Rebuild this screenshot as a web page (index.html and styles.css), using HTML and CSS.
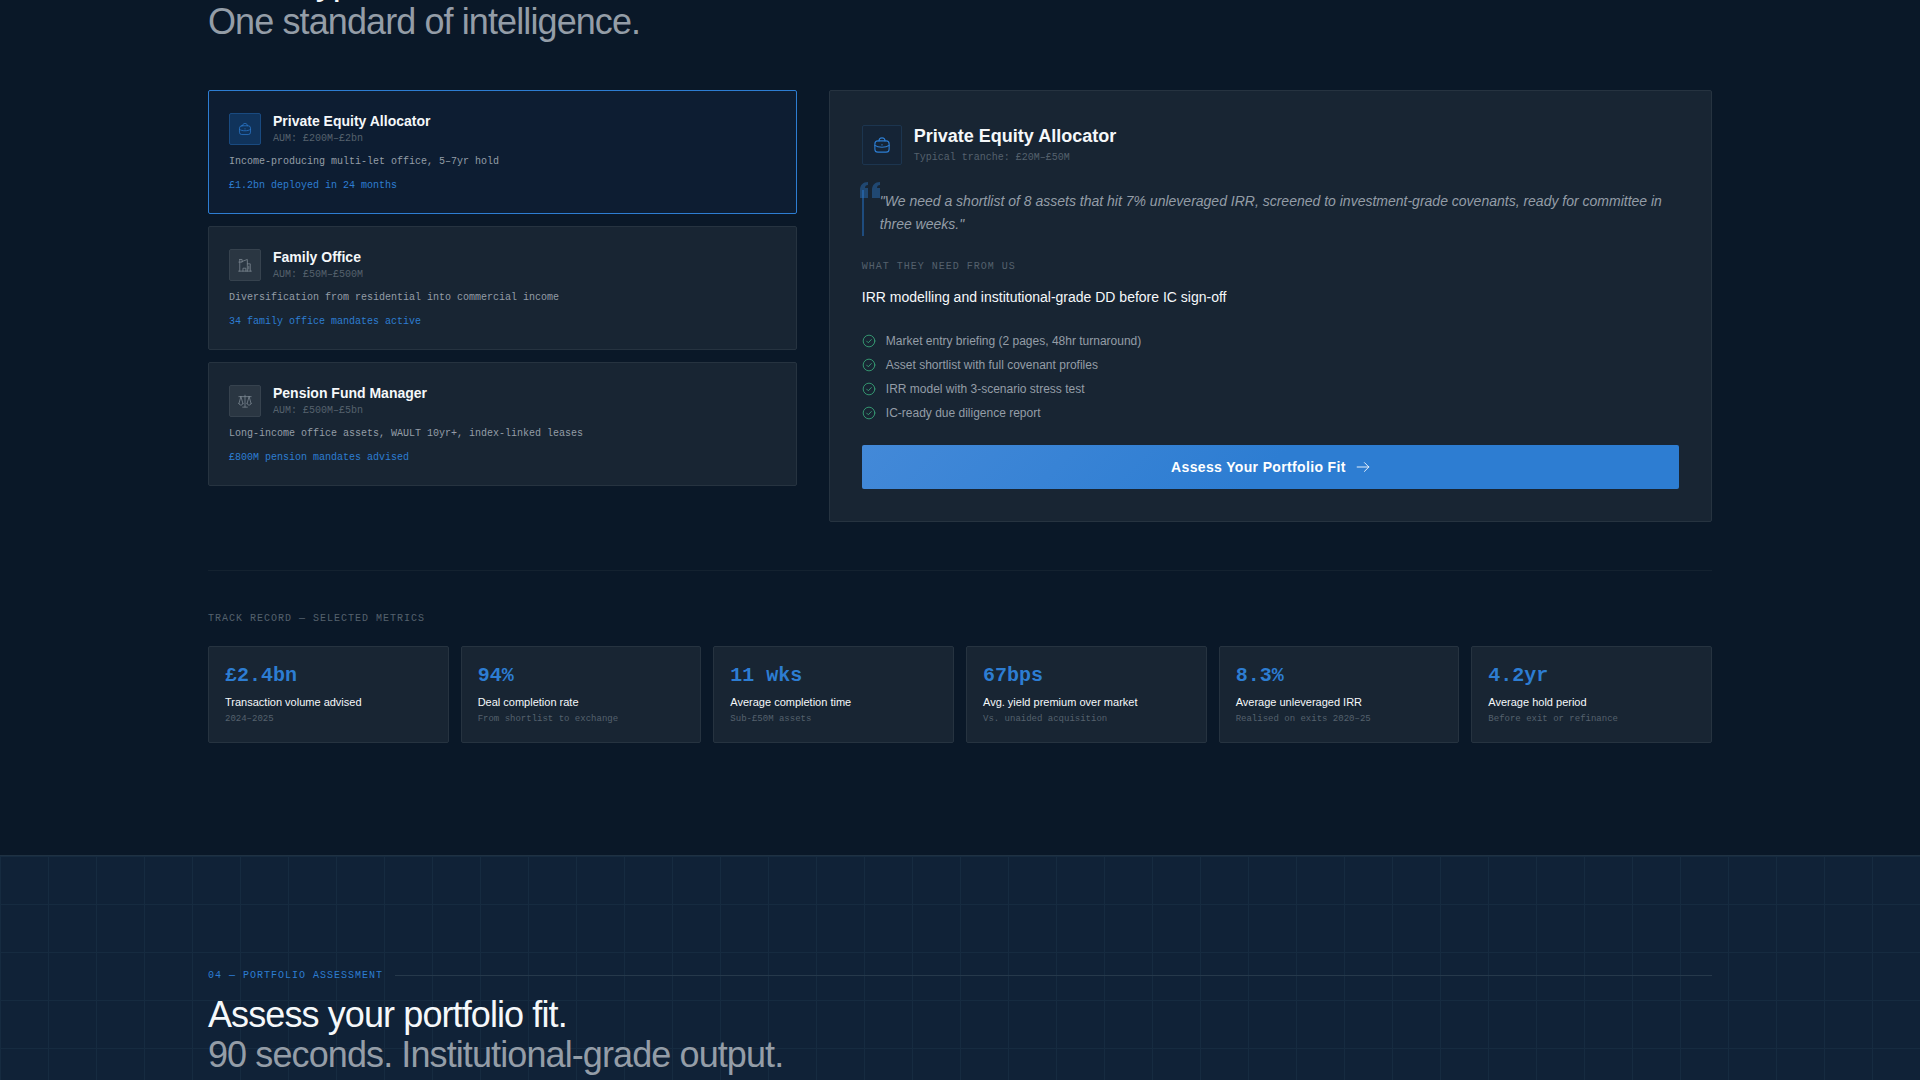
FILE: index.html
```
<!DOCTYPE html>
<html lang="en">
<head>
  <meta charset="UTF-8">
  <title>Portfolio Assessment</title>
  <link rel="stylesheet" href="styles.css">
</head>
<body>
  <svg class="sprite" aria-hidden="true">
    <symbol id="i-briefcase" viewBox="0 0 24 24">
      <rect x="2.500" y="6.500" width="19" height="15" rx="4"/>
      <path d="M8 6.500C8 4 9 2.500 12 2.500s4 1.500 4 4M2.500 12.500c2.500 2 5.500 2.500 9.500 2.500s7-.5 9.500-2.500M12 11.500v.5"/>
    </symbol>
    <symbol id="i-building" viewBox="0 0 24 24">
      <path d="M1 22.500h22M3 22.500V2.500M3 2.500h4v4M1.500 7h5M7 6l9-3.500v4M16 7v15.500M16 10h5v12.500M8.500 22.500v-5h5v5M18.500 14v5"/>
    </symbol>
    <symbol id="i-scales" viewBox="0 0 24 24">
      <path d="M12 2v20M8 22.500h8M1.500 4.500h21M5 4.500l-3.500 12M5 4.500l3.500 12M19 4.500l-3.500 12M19 4.500l3.500 12M1.500 16.500c.5 3.500 6.500 3.500 7 0M15.500 16.500c.5 3.500 6.500 3.500 7 0"/>
    </symbol>
    <symbol id="i-check" viewBox="0 0 24 24">
      <circle cx="12" cy="12" r="10"/>
      <path d="M8 12.200l2.800 2.800L16 9.500"/>
    </symbol>
    <symbol id="i-arrow" viewBox="0 0 24 24">
      <path d="M2 12h20M14.500 4.500L22 12l-7.500 7.500"/>
    </symbol>
    <symbol id="i-quote" viewBox="0 0 20 16">
      <path d="M0 16V8C0 3 3 0 8 0v3C6 3 5 4 5 6h3v10zM12 16V8c0-5 3-8 8-8v3c-2 0-3 1-3 3h3v10z"/>
    </symbol>
  </svg>

  <section class="investors">
    <div class="container">
      <h2 class="heading">Three types of investor.<br><span>One standard of intelligence.</span></h2>

      <div class="profiles">
        <div class="profile-list">
          <button type="button" class="profile active">
            <span class="profile-head">
              <span class="profile-icon"><svg><use href="#i-briefcase"/></svg></span>
              <span>
                <span class="profile-name">Private Equity Allocator</span>
                <span class="profile-aum">AUM: £200M–£2bn</span>
              </span>
            </span>
            <span class="profile-text">Income-producing multi-let office, 5–7yr hold</span>
            <span class="profile-stat">£1.2bn deployed in 24 months</span>
          </button>
          <button type="button" class="profile">
            <span class="profile-head">
              <span class="profile-icon"><svg><use href="#i-building"/></svg></span>
              <span>
                <span class="profile-name">Family Office</span>
                <span class="profile-aum">AUM: £50M–£500M</span>
              </span>
            </span>
            <span class="profile-text">Diversification from residential into commercial income</span>
            <span class="profile-stat">34 family office mandates active</span>
          </button>
          <button type="button" class="profile">
            <span class="profile-head">
              <span class="profile-icon"><svg><use href="#i-scales"/></svg></span>
              <span>
                <span class="profile-name">Pension Fund Manager</span>
                <span class="profile-aum">AUM: £500M–£5bn</span>
              </span>
            </span>
            <span class="profile-text">Long-income office assets, WAULT 10yr+, index-linked leases</span>
            <span class="profile-stat">£800M pension mandates advised</span>
          </button>
        </div>

        <article class="detail">
          <header class="detail-head">
            <span class="detail-icon"><svg><use href="#i-briefcase"/></svg></span>
            <div>
              <h3>Private Equity Allocator</h3>
              <p>Typical tranche: £20M–£50M</p>
            </div>
          </header>
          <blockquote>
            <svg class="quote-mark"><use href="#i-quote"/></svg>
            "We need a shortlist of 8 assets that hit 7% unleveraged IRR, screened to investment-grade covenants, ready for committee in three weeks."
          </blockquote>
          <h4 class="label">What they need from us</h4>
          <p class="need">IRR modelling and institutional-grade DD before IC sign-off</p>
          <ul class="deliverables">
            <li><svg><use href="#i-check"/></svg>Market entry briefing (2 pages, 48hr turnaround)</li>
            <li><svg><use href="#i-check"/></svg>Asset shortlist with full covenant profiles</li>
            <li><svg><use href="#i-check"/></svg>IRR model with 3-scenario stress test</li>
            <li><svg><use href="#i-check"/></svg>IC-ready due diligence report</li>
          </ul>
          <button type="button" class="cta">Assess Your Portfolio Fit <svg><use href="#i-arrow"/></svg></button>
        </article>
      </div>

      <div class="record">
        <h4 class="label">Track record — selected metrics</h4>
        <div class="metrics">
          <div class="metric"><strong>£2.4bn</strong><span>Transaction volume advised</span><small>2024–2025</small></div>
          <div class="metric"><strong>94%</strong><span>Deal completion rate</span><small>From shortlist to exchange</small></div>
          <div class="metric"><strong>11 wks</strong><span>Average completion time</span><small>Sub-£50M assets</small></div>
          <div class="metric"><strong>67bps</strong><span>Avg. yield premium over market</span><small>Vs. unaided acquisition</small></div>
          <div class="metric"><strong>8.3%</strong><span>Average unleveraged IRR</span><small>Realised on exits 2020–25</small></div>
          <div class="metric"><strong>4.2yr</strong><span>Average hold period</span><small>Before exit or refinance</small></div>
        </div>
      </div>
    </div>
  </section>

  <section class="assessment">
    <div class="container">
      <p class="eyebrow">04 — Portfolio assessment</p>
      <h2 class="heading">Assess your portfolio fit.<br><span>90 seconds. Institutional-grade output.</span></h2>
    </div>
  </section>
</body>
</html>
```

FILE: styles.css
```
:root {
  --sans: "Liberation Sans", Arial, sans-serif;
  --mono: "Liberation Mono", "Courier New", monospace;
  --bg: #0a1828;
  --card: #182533;
  --line: #263340;
  --blue: #2d7dd2;
  --text: #f5f8fa;
  --soft: #949da7;
  --dim: #55616d;
}

* {
  box-sizing: border-box;
  margin: 0;
  padding: 0;
}

body {
  display: flex;
  flex-direction: column;
  min-height: 100vh;
  background: var(--bg);
  color: var(--text);
  font-family: var(--sans);
}

svg {
  display: block;
  fill: none;
  stroke: currentColor;
  stroke-width: 1.5;
  stroke-linecap: round;
  stroke-linejoin: round;
  flex-shrink: 0;
}

.sprite {
  display: none;
}

.container {
  width: 100%;
  max-width: 1600px;
  margin: 0 auto;
  padding: 0 48px;
}

.heading {
  font-size: 36px;
  font-weight: 400;
  line-height: 40px;
  letter-spacing: -0.025em;
}

.heading span {
  color: var(--soft);
}

.label,
.eyebrow {
  font-family: var(--mono);
  font-size: 10px;
  font-weight: 400;
  line-height: 16px;
  letter-spacing: 1px;
  text-transform: uppercase;
  color: var(--dim);
}

/* Investor profiles */
.investors {
  padding-bottom: 112px;
}

/* the page is scrolled part way into this heading */
.investors .heading {
  margin: -38px 0 48px;
}

.profiles {
  display: grid;
  grid-template-columns: 2fr 3fr;
  gap: 32px;
  align-items: start;
}

.profile-list {
  display: flex;
  flex-direction: column;
  gap: 12px;
}

.profile {
  display: flex;
  flex-direction: column;
  gap: 8px;
  padding: 20px 20px 19px;
  background: var(--card);
  border: 1px solid var(--line);
  border-radius: 2px;
  font-family: var(--mono);
  font-size: 10px;
  line-height: 16px;
  text-align: left;
  cursor: pointer;
}

.profile.active {
  background: #0d1d32;
  border-color: var(--blue);
}

.profile-head {
  display: flex;
  align-items: center;
  gap: 12px;
}

.profile-icon {
  display: grid;
  place-items: center;
  width: 32px;
  height: 32px;
  background: #2a3642;
  border: 1px solid #36424e;
  border-radius: 2px;
  color: #85909b;
}

.profile-icon svg {
  width: 14px;
  height: 14px;
  stroke-width: 1.2;
}

.active .profile-icon {
  background: #10335b;
  border-color: #194a80;
  color: var(--blue);
}

.profile-name {
  display: block;
  font-family: var(--sans);
  font-size: 14px;
  font-weight: 700;
  line-height: 20px;
  color: var(--text);
}

.profile-aum {
  display: block;
  line-height: 15px;
  color: var(--dim);
}

.profile-text {
  color: var(--soft);
}

.profile-stat {
  color: var(--blue);
}

/* Selected profile */
.detail {
  padding: 32px;
  background: var(--card);
  border: 1px solid var(--line);
  border-radius: 2px;
}

.detail-head {
  display: flex;
  align-items: center;
  gap: 12px;
  margin-bottom: 24px;
}

.detail-icon {
  display: grid;
  place-items: center;
  width: 40px;
  height: 40px;
  border: 1px solid #1c354f;
  border-radius: 2px;
  background: #152436;
  color: var(--blue);
}

.detail-icon svg {
  width: 18px;
  height: 18px;
}

.detail h3 {
  font-size: 18px;
  line-height: 27px;
}

.detail-head p {
  font-family: var(--mono);
  font-size: 10px;
  line-height: 16px;
  color: var(--dim);
}

blockquote {
  position: relative;
  padding-left: 16px;
  border-left: 2px solid #1e4c7e;
  font-size: 14px;
  font-style: italic;
  line-height: 23px;
  color: var(--soft);
}

.quote-mark {
  position: absolute;
  top: -8px;
  left: -4px;
  width: 20px;
  height: 16px;
  fill: var(--blue);
  stroke: none;
  opacity: 0.4;
}

.detail .label {
  margin: 23px 0 11px;
}

.need {
  font-size: 14px;
  line-height: 23px;
  margin-bottom: 24px;
}

.deliverables {
  display: flex;
  flex-direction: column;
  gap: 8px;
  list-style: none;
  margin-bottom: 24px;
}

.deliverables li {
  display: flex;
  align-items: center;
  gap: 10px;
  font-size: 12px;
  line-height: 16px;
  color: var(--soft);
}

.deliverables svg {
  width: 14px;
  height: 14px;
  color: #38a277;
}

.cta {
  display: flex;
  align-items: center;
  justify-content: center;
  gap: 10px;
  width: 100%;
  height: 44px;
  border: 0;
  border-radius: 2px;
  background: linear-gradient(135deg, #4389d8 0%, var(--blue) 50%);
  color: #fff;
  font-family: var(--sans);
  font-size: 14px;
  font-weight: 700;
  letter-spacing: 0.025em;
  cursor: pointer;
}

.cta svg {
  width: 14px;
  height: 14px;
}

/* Track record */
.record {
  margin-top: 48px;
  padding-top: 40px;
  border-top: 1px solid #142230;
}

.metrics {
  display: grid;
  grid-template-columns: repeat(6, 1fr);
  gap: 12px;
  margin-top: 19px;
}

.metric {
  display: flex;
  flex-direction: column;
  padding: 16px 16px 15px;
  background: var(--card);
  border: 1px solid var(--line);
  border-radius: 2px;
}

.metric strong {
  font-family: var(--mono);
  font-size: 20px;
  line-height: 26px;
  margin-bottom: 4px;
  color: var(--blue);
}

.metric span {
  font-size: 11px;
  line-height: 18px;
}

.metric small {
  margin-top: 1px;
  font-family: var(--mono);
  font-size: 9px;
  line-height: 15px;
  color: var(--dim);
}

/* Assessment */
.assessment {
  flex: 1;
  padding-top: 111px;
  border-top: 1px solid #1f3142;
  background:
    linear-gradient(#162b40 1px, transparent 1px) 0 0 / 48px 48px,
    linear-gradient(90deg, #162b40 1px, transparent 1px) 0 0 / 48px 48px,
    #102237;
}

.eyebrow {
  display: flex;
  align-items: center;
  gap: 12px;
  margin-bottom: 11px;
  line-height: 17px;
  color: var(--blue);
}

.eyebrow::after {
  content: "";
  flex: 1;
  height: 1px;
  background: #26394b;
}
```
